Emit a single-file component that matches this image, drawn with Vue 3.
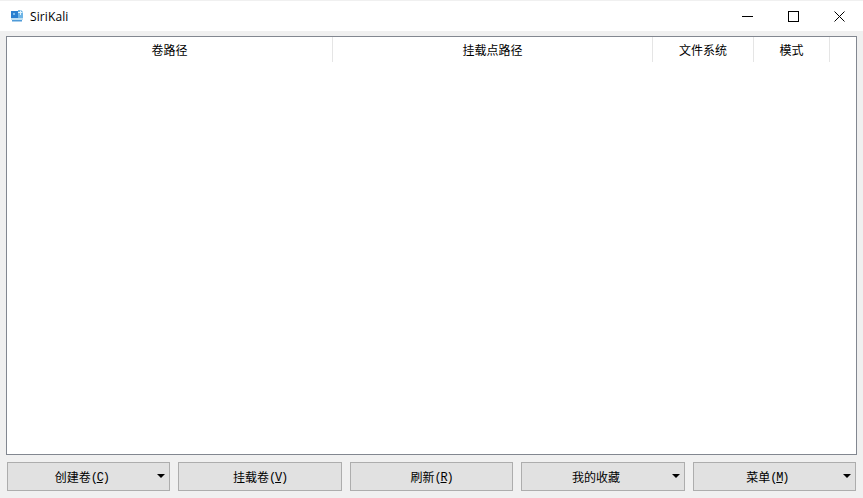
<script setup>
const columns = [
  { label: '卷路径', cls: 'col-volume' },
  { label: '挂载点路径', cls: 'col-mount' },
  { label: '文件系统', cls: 'col-fs' },
  { label: '模式', cls: 'col-mode' },
]

const buttons = [
  { label: '创建卷', key: 'C', menu: true },
  { label: '挂载卷', key: 'V', menu: false },
  { label: '刷新', key: 'R', menu: false },
  { label: '我的收藏', key: '', menu: true },
  { label: '菜单', key: 'M', menu: true },
]
</script>

<template>
  <div class="window">
    <header class="titlebar">
      <svg class="app-icon" width="14" height="14" viewBox="0 0 14 14">
        <path d="M1 2h7v7H1z" fill="#2a7fd0" />
        <path d="M8 1h3l2 2v6H8z" fill="#6db4e6" />
        <path d="M8 3h2V1.500h1V3h1.500v1H11v2h-1V4H8z" fill="#e3f3fc" />
        <path d="M1 9h12v2H1z" fill="#bfe0f4" />
        <path d="M2 11h10v1.500H2z" fill="#4f9bd8" />
        <path d="M3 4h2v2H3z" fill="#7fbfeb" />
      </svg>
      <span class="app-name">SiriKali</span>
      <div class="controls">
        <span class="control">
          <svg width="11" height="11" viewBox="0 0 11 11"><path d="M0 5.500h11" stroke="#000" fill="none" /></svg>
        </span>
        <span class="control">
          <svg width="11" height="11" viewBox="0 0 11 11"><rect x="0.500" y="0.500" width="10" height="10" stroke="#000" fill="none" /></svg>
        </span>
        <span class="control">
          <svg width="11" height="11" viewBox="0 0 11 11"><path d="M0.500 0.500l10 10M10.500 0.500l-10 10" stroke="#000" fill="none" /></svg>
        </span>
      </div>
    </header>

    <main class="content">
      <section class="table">
        <div class="table-head">
          <div v-for="col in columns" :key="col.label" :class="['head-cell', col.cls]">{{ col.label }}</div>
        </div>
      </section>

      <footer class="actions">
        <button v-for="btn in buttons" :key="btn.label" :class="['action', { 'has-menu': btn.menu }]">
          <span class="action-label">{{ btn.label }}<span v-if="btn.key" class="mnemonic">(<u>{{ btn.key }}</u>)</span></span>
          <span v-if="btn.menu" class="caret"></span>
        </button>
      </footer>
    </main>
  </div>
</template>

<style>
html, body {
  margin: 0;
  background: #f0f0f0;
}
</style>

<style scoped>
.window {
  width: 863px;
  height: 498px;
  display: flex;
  flex-direction: column;
  background: #f0f0f0;
  font-family: "Noto Sans CJK SC", "Liberation Sans", sans-serif;
  font-size: 12px;
  color: #000;
  overflow: hidden;
}

.titlebar {
  height: 30px;
  margin-top: 1px;
  flex: none;
  display: flex;
  align-items: center;
  background: #fff;
  padding-left: 10px;
}

.app-icon {
  flex: none;
}

.app-name {
  margin-left: 6px;
  font-family: "Open Sans", "Liberation Sans", sans-serif;
  font-size: 12px;
  letter-spacing: 0.1px;
}

.controls {
  margin-left: auto;
  display: flex;
  padding-right: 1px;
}

.control {
  width: 46px;
  height: 30px;
  display: flex;
  align-items: center;
  justify-content: center;
}

.content {
  flex: 1;
  min-height: 0;
  display: flex;
  flex-direction: column;
  padding: 5px 6px 7px;
}

.table {
  height: 419px;
  flex: none;
  box-sizing: border-box;
  border: 1px solid #828790;
  background: #fff;
}

.table-head {
  display: flex;
  height: 25px;
}

.head-cell {
  box-sizing: border-box;
  border-right: 1px solid #e5e5e5;
  display: flex;
  align-items: center;
  justify-content: center;
}

.col-volume { width: 326px; }
.col-mount { width: 320px; }
.col-fs { width: 101px; }
.col-mode { width: 76px; }

.actions {
  margin-top: 7px;
  display: grid;
  grid-template-columns: repeat(5, 1fr);
  gap: 8px;
  padding: 0 1px;
}

.action {
  position: relative;
  height: 29px;
  box-sizing: border-box;
  border: 1px solid #adadad;
  background: #e1e1e1;
  padding: 0;
  font: inherit;
  color: inherit;
}

.action.has-menu {
  padding-right: 14px;
}

.mnemonic {
  font-family: "Liberation Mono", monospace;
  font-size: 12px;
  letter-spacing: -1.2px;
  vertical-align: 1px;
}

.caret {
  position: absolute;
  right: 4px;
  top: 11px;
  width: 0;
  height: 0;
  border-left: 4px solid transparent;
  border-right: 4px solid transparent;
  border-top: 4px solid #000;
}
</style>
